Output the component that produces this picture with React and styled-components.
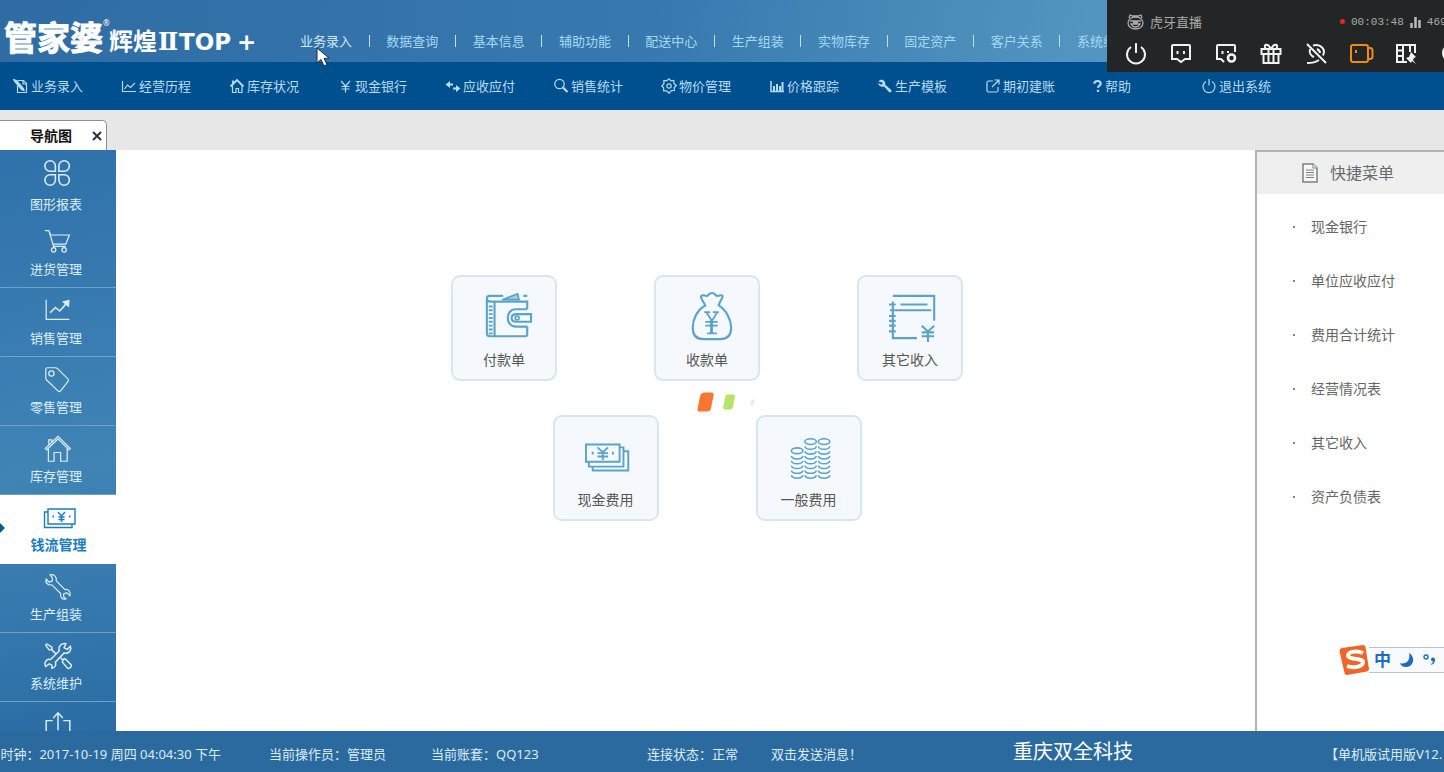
import React from "react"
import styled, { createGlobalStyle } from "styled-components"

const topMenu = [
  "业务录入",
  "数据查询",
  "基本信息",
  "辅助功能",
  "配送中心",
  "生产组装",
  "实物库存",
  "固定资产",
  "客户关系",
  "系统维护",
]

const tools = [
  { text: "业务录入", icon: "entry" },
  { text: "经营历程", icon: "line" },
  { text: "库存状况", icon: "home" },
  { text: "现金银行", icon: "yen" },
  { text: "应收应付", icon: "swap" },
  { text: "销售统计", icon: "search" },
  { text: "物价管理", icon: "gear" },
  { text: "价格跟踪", icon: "bars" },
  { text: "生产模板", icon: "wrench" },
  { text: "期初建账", icon: "share" },
  { text: "帮助", icon: "help", narrow: true },
  { text: "退出系统", icon: "power" },
]

const sections = [
  { text: "图形报表", icon: "petals", first: true },
  { text: "进货管理", icon: "cart" },
  { text: "销售管理", icon: "trend" },
  { text: "零售管理", icon: "tag" },
  { text: "库存管理", icon: "house" },
  { text: "钱流管理", icon: "money", active: true },
  { text: "生产组装", icon: "spanner" },
  { text: "系统维护", icon: "repair" },
]

const cardRows = [
  [
    { text: "付款单", icon: "wallet" },
    { text: "收款单", icon: "bag" },
    { text: "其它收入", icon: "ledger" },
  ],
  [
    { text: "现金费用", icon: "notes" },
    { text: "一般费用", icon: "coins" },
  ],
]

const shortcuts = [
  "现金银行",
  "单位应收应付",
  "费用合计统计",
  "经营情况表",
  "其它收入",
  "资产负债表",
]

const toolIcons = {
  entry: (
    <>
      <path d="M4.500 2.500h6l3 3v9h-9v-7M10 3v3h3" />
      <path d="M0.500 1.500l3 1 7 8 0.500 2-2-0.500-7-8z" fill="currentColor" />
    </>
  ),
  line: <path d="M1.500 3v10.500H15M3.500 11l3-4 3 2.500L14 5" />,
  home: (
    <>
      <path d="M3.500 7.500v7h3.500v-4h2.500v4h3.500v-7" />
      <path d="M1.500 8.500L8 2l6.500 6.500M4 5.500V2.500" strokeWidth="1.800" />
    </>
  ),
  yen: <path d="M4 3l4.500 5L13 3M8.500 8v6.500M4.500 8.500h8M4.500 11h8" />,
  swap: (
    <>
      <path d="M3 6.500h5M8 10.500h5" strokeWidth="1.800" />
      <path d="M0.500 6.500L5 3v7zM15.500 10.500L11 7v7z" fill="currentColor" stroke="none" />
    </>
  ),
  search: (
    <>
      <circle cx="6.500" cy="6" r="4.700" />
      <path d="M10 9.500l4.500 4.500" strokeWidth="2.200" />
    </>
  ),
  gear: (
    <>
      <path d="M8 0.800l2 2 2.800-0.300 0.200 2.900 2.300 2.100-2.100 2 0.200 3-3 0.200L8 15.200l-2.300-2.300-3 0-0.100-3.100L0.800 8l2.100-2.300 0-3 3-0.100z" />
      <circle cx="8" cy="8" r="2.200" />
    </>
  ),
  bars: (
    <>
      <path d="M2 3v10.500h13" strokeWidth="1.500" />
      <path d="M5 13V8M8 13V6M11 13V8M13.500 13V4" strokeWidth="2" />
    </>
  ),
  wrench: (
    <path
      d="M1.500 3.500c1-2 4-2.500 5.800-0.500 1 1 1.200 2.500 0.700 3.500l6 5.200c1.500 1.500-0.500 3.600-2 2.300L7 8.500C4.500 9.500 1 7.500 1.300 5l3 1.700 1.700-1.900z"
      fill="currentColor"
      stroke="none"
    />
  ),
  share: <path d="M8 3H3.500c-1 0-1.500 0.500-1.500 1.500v8c0 1 0.500 1.500 1.500 1.500h8c1 0 1.500-0.500 1.500-1.500V9M9.500 2H14v4.500M14 2L7 9" />,
  help: <path d="M4.500 5.500c0-4 7-4 7 0 0 2.200-3 2.200-3 4.500M8.500 12v2.500" strokeWidth="2.400" />,
  power: <path d="M5 3.500a6 6 0 1 0 6 0M8 1v6.500" />,
}

const sideIcons = {
  petals: (
    <g strokeWidth="1.800">
      <path d="M13 14H7a6 6 0 1 1 6-6zM17 14V8a6 6 0 1 1 6 6zM13 18v6a6 6 0 1 1-6-6zM17 18h6a6 6 0 1 1-6 6z" />
    </g>
  ),
  cart: (
    <>
      <path d="M1 3h4.500l5.500 18h14M7 8h22l-4 10.500H10.500M6.500 5l1 3" />
      <circle cx="11" cy="25" r="2.500" />
      <circle cx="23" cy="25" r="2.500" />
    </>
  ),
  trend: (
    <>
      <path d="M2.500 3v22.500H29" />
      <path d="M7 18l6-6 5 4 8-9" strokeWidth="1.800" />
      <path d="M22 5.500l6.500-1.500-0.500 6.500z" fill="currentColor" />
    </>
  ),
  tag: (
    <>
      <path d="M2 4c0-1.200 0.800-2 2-2h9c1 0 1.800 0.300 2.500 1l12 12c0.800 0.800 0.800 1.800 0 2.600L19 28.500c-1 1-2 1-3 0L3 16c-0.700-0.700-1-1.500-1-2.500z" />
      <circle cx="8.500" cy="8.500" r="3" />
    </>
  ),
  house: (
    <>
      <path d="M1.500 15.500L16 1.500l14 14-1.500 1.500L16 4.500 3 17z" />
      <path d="M5 15v15h6.500V20h7.500v10h7.500V15M5.500 11V5.500h3.500V8" />
    </>
  ),
  money: (
    <>
      <path d="M5 4h27v15H5zM5 7H1.500v15.500H29V19" />
      <path d="M15 7l3.500 4L22 7M18.500 11v6M15.500 12h6M15.500 14.500h6" />
      <path d="M9.500 11.500h1.500M26 11.500h1.500" strokeWidth="1.800" />
    </>
  ),
  spanner: (
    <path d="M7 2c4-1 8 2 7 7l10 10c4-1 7 3 5.500 7l-3.500-3.500-3.500 1.500 0 3.500 2.500 2c-4 1.500-7-2-6-6L9 13.500c-4 1-8-2-6.500-6.500L6 10.500l3.500-1.500V5.500z" />
  ),
  repair: (
    <g strokeWidth="1.700">
      <path d="M25 2c-5-1-9 3-7.500 8L7.500 20c-5-1-8 4-5.500 8l4-3 3 1.500 0 3.500c4-0.500 5-4 4-7L23 12.500c5 1.500 9-3 7-7.500L26.500 8.500 23 6.500z" />
      <path d="M3 2l6 4v3l5 5M3 2l-1 2 4 5 3 0M19 18l3 3M22 20l2-1 7 7c1 2-2 5-4 4l-6-7z" />
    </g>
  ),
  upload: <path d="M10 11H2.500v18h27V11H22M16 22V3M10.500 8L16 2l5.500 6" strokeWidth="1.700" />,
}

const cardIcons = {
  wallet: (
    <>
      <path d="M8 10h38v8M46 36v8c0 1.500-1 2-2 2H7c-2 0-3-1-3-3V7c0-2 1-3 3-3h14M4 7c0 2 1 3 4 3M12 10v36M42 4h4" strokeWidth="2.200" />
      <path d="M20 8l16-6 1.500 6z" fill="currentColor" fillOpacity="0.500" />
      <path d="M46 18H34c-11 0-11 18 0 18h12" strokeWidth="2.200" />
      <path d="M50 23H35c-7 0-7 8 0 8h15z" strokeWidth="2.200" />
      <circle cx="35.500" cy="27" r="2" />
      <path d="M8 14v30" strokeWidth="4" strokeDasharray="2 2" />
    </>
  ),
  bag: (
    <>
      <path d="M20 14C18 9 14 6 16 4s4 1 6 0 2-3 5-3 3 2 5 3 5-2 6 0-3 5-4 10c8 5 13 15 13 23 0 8-3 12-11 12H18C10 49 7 45 7 37c0-8 4-18 13-23z" strokeWidth="2.200" />
      <path d="M19 21h6M28 21h6M21 21l6 9 5.500-9M20 31h13M20 35h13M22 43h10" />
      <path d="M26.500 29v14" strokeWidth="3" />
    </>
  ),
  ledger: (
    <g strokeWidth="2.200">
      <path d="M4 4h43v26M4 10v38h25M12 13h28M1 19h43" />
      <path d="M0 13h7M0 25h7M0 30h7M0 35h7M0 41h7" />
      <path d="M34 35l6.500 6 6.500-6M40.500 41v11M34 42h13M34 46h13" />
    </g>
  ),
  notes: (
    <g transform="translate(-2 4)">
      <path d="M3 9h35v18H3zM38 12h4v20H6v-5M42 16h5v20H10v-4" strokeWidth="2" />
      <path d="M15 12l5.500 5L26 12M20.500 17v8M15 18h11M15 21.500h11" strokeWidth="2" />
      <path d="M9 18h2M30 18h2" strokeWidth="3" />
    </g>
  ),
  coins: (
    <g strokeWidth="1.600" transform="translate(-1 4)">
      <ellipse cx="10.500" cy="15.500" rx="6" ry="3" />
      <ellipse cx="24.500" cy="6" rx="6" ry="3" />
      <ellipse cx="38.500" cy="6" rx="6" ry="3" />
      {[21, 26, 31, 36, 41].map(y => (
        <path key={y} d={`M4.500 ${y}c1 4 11 4 12 0M18.500 ${y}c1 4 11 4 12 0M32.500 ${y}c1 4 11 4 12 0`} />
      ))}
      {[11, 16].map(y => (
        <path key={y} d={`M18.500 ${y}c1 4 11 4 12 0M32.500 ${y}c1 4 11 4 12 0`} />
      ))}
    </g>
  ),
}

const liveIcons = [
  { name: "关闭", draw: <path d="M6 4a9 9 0 1 0 10 0M11 0v10" /> },
  {
    name: "弹幕",
    draw: <path d="M3 2h16q1 0 1 1v13h-5l-4 3-4-3H2V3q0-1 1-1zM7.500 8v3M14 8v3" />,
  },
  {
    name: "弹幕设置",
    draw: (
      <>
        <path d="M20 9V3q0-1-1-1H3Q2 2 2 3v13h4l3 3M7.500 8v3M13 8v2" />
        <circle cx="16.500" cy="15" r="3.500" strokeWidth="2.600" />
      </>
    ),
  },
  {
    name: "礼物",
    draw: <path d="M1.500 6h19v5h-19zM3.500 11v9h15v-9M8.500 6v14M13.500 6v14M10.500 5.500C8 0 3 1 5.500 5.500M11.500 5.500C14 0 19 1 16.500 5.500" />,
  },
  {
    name: "静音",
    draw: <path d="M2 1l19 19M8 2.500c8-2 13 4 10 10M5 6c-1 4 1 7 4 8M2 20c5 0 9-1 12-3M12 6c2 1 3 2 3 4" />,
  },
  {
    name: "摄像",
    orange: true,
    draw: <path d="M3 2h13q2 0 2 2v13q0 2-2 2H3q-2 0-2-2V4q0-2 2-2zM18 5h2c1.500 0 2.500 1 2.500 2.500v6c0 1.500-1 2.500-2.500 2.500h-2M6 7v3" />,
  },
  {
    name: "录像",
    draw: (
      <>
        <path d="M12 19H2V2h18v8M8 2v17M15 2v7M2 7.500h6M2 13h6" />
        <path d="M16 9l5 5-2 1-1 2 3 4-4-3-1 2-5-5 3-1z" fill="currentColor" stroke="none" />
      </>
    ),
  },
  { name: "更多", draw: <circle cx="11" cy="10" r="8" /> },
]

function App() {
  return (
    <Page>
      <GlobalStyle />
      <Header>
        <Logo>
          <Brand>管家婆</Brand>
          <Reg>®</Reg>
          <Edition>辉煌</Edition>
          <Roman>Ⅱ</Roman>
          <Top>TOP</Top>
          <Top>+</Top>
        </Logo>
        <TopNav>
          {topMenu.map((text, i) => (
            <React.Fragment key={text}>
              {i > 0 && <Divider />}
              <TopButton $current={i === 0}>{text}</TopButton>
            </React.Fragment>
          ))}
        </TopNav>
      </Header>
      <Toolbar>
        {tools.map(t => (
          <ToolButton key={t.text}>
            <ToolIcon viewBox={t.narrow ? "3 0 11 16" : "0 0 16 16"} $narrow={t.narrow}>
              {toolIcons[t.icon]}
            </ToolIcon>
            {t.text}
          </ToolButton>
        ))}
      </Toolbar>
      <TabStrip>
        <Tab>
          <TabTitle>导航图</TabTitle>
          <CloseButton aria-label="关闭">
            <svg width="10" height="10" viewBox="0 0 10 10">
              <path d="M1 1l8 8M9 1L1 9" stroke="#27333c" strokeWidth="2" />
            </svg>
          </CloseButton>
        </Tab>
      </TabStrip>
      <Body>
        <Sidebar>
          {sections.map(s => (
            <Section key={s.text} $first={s.first} $active={s.active}>
              {s.active && <Pointer />}
              <SideIcon viewBox={s.active ? "0 0 34 26" : "0 0 32 32"} $wide={s.active}>
                {sideIcons[s.icon]}
              </SideIcon>
              <span>{s.text}</span>
            </Section>
          ))}
          <Section aria-label="更多">
            <SideIcon viewBox="0 0 32 32">{sideIcons.upload}</SideIcon>
          </Section>
        </Sidebar>
        <Board>
          {cardRows.map((row, i) => (
            <CardRow key={i}>
              {row.map(c => (
                <Card key={c.text}>
                  <CardIcon viewBox="0 0 52 52">{cardIcons[c.icon]}</CardIcon>
                  <span>{c.text}</span>
                </Card>
              ))}
            </CardRow>
          ))}
        </Board>
        <Panel>
          <PanelHead>
            <svg width="16" height="20" viewBox="0 0 16 20" fill="#f7f7f7" stroke="#7d8082">
              <path d="M1 1h10l4 4v14H1z" strokeWidth="1.500" />
              <path d="M11 1v4h4M4 7h8M4 9.500h8M4 12h8M4 14.500h8" />
            </svg>
            快捷菜单
          </PanelHead>
          <ShortcutList>
            {shortcuts.map(text => (
              <li key={text}>
                <Shortcut href="#">{text}</Shortcut>
              </li>
            ))}
          </ShortcutList>
        </Panel>
      </Body>
      <Footer>
        <Clock>时钟：2017-10-19 周四 04:04:30 下午</Clock>
        <span>当前操作员：管理员</span>
        <span>当前账套：QQ123</span>
        <span>连接状态：正常</span>
        <span>双击发送消息！</span>
        <Company>重庆双全科技</Company>
        <span>【单机版试用版V12.</span>
      </Footer>

      <Loading viewBox="0 0 60 22">
        <path d="M8 2h6q3 0 2.500 3l-2.500 12q-1 3-4 3H4q-3 0-2.500-3l2.500-12q1-3 4-3z" fill="#f8762f" />
        <path d="M30 4h5q2 0 1.500 2l-2 10q-0.500 2-2.500 2h-5q-2 0-1.500-2l2-10q0.500-2 2.500-2z" fill="#b6e468" />
        <path d="M52 9h3l-1.500 5h-3z" fill="#e6ece8" />
      </Loading>
      <Live>
        <LiveTitle>
          <svg width="17" height="16" viewBox="0 0 17 16" fill="none" stroke="#aaa" strokeWidth="1.300">
            <path d="M2 4l1-3 3 1h5l3-1 1 3M1 9c0-8 15-8 15 0s-15 8-15 0zM3 7h11M4 10c2 4 7 4 9 0z" />
            <path d="M6 8.500h5" strokeWidth="3" />
          </svg>
          <LiveName>虎牙直播</LiveName>
          <RecordDot />
          <LiveTime>00:03:48</LiveTime>
          <svg width="11" height="12" viewBox="0 0 11 12" stroke="#bbb" strokeWidth="2.500">
            <path d="M1.500 12V7M5.500 12V1M9.500 12V4" />
          </svg>
          <LiveTime>469</LiveTime>
        </LiveTitle>
        <LiveTools>
          {liveIcons.map(icon => (
            <LiveButton key={icon.name} aria-label={icon.name} $orange={icon.orange}>
              <svg width="22" height="22" viewBox="0 0 22 22">
                {icon.draw}
              </svg>
            </LiveButton>
          ))}
        </LiveTools>
      </Live>
      <Ime>
        <svg width="30" height="30" viewBox="0 0 30 30">
          <path d="M3 3l21-3q2 0 2.500 2L30 24q0 2-2 2.500L8 30q-2 0-2.500-2L0.500 6q0-2.500 2.500-3z" fill="#ee6527" />
          <path d="M24 8C17 5 8 7 9 11s15 2 15 6-8 7-16 4" fill="none" stroke="#fff" strokeWidth="4" />
        </svg>
        <ImeBar>
          <ImeMode>中</ImeMode>
          <svg width="16" height="16" viewBox="0 0 16 16">
            <path d="M10 1c6 4 5 10 1 13-4 2-9 1-10-3 5 2 11-2 9-10z" fill="#1c6cc0" />
          </svg>
          <svg width="14" height="14" viewBox="0 0 14 14">
            <circle cx="3" cy="4" r="2" fill="none" stroke="#1c6cc0" strokeWidth="1.400" />
            <path d="M8 6.500a2 2 0 1 1 4 0q0 4-3.500 5.500l-0.500-1q2-1 2-2.500-2 0-2-2z" fill="#1c6cc0" />
          </svg>
        </ImeBar>
      </Ime>
      <Cursor viewBox="0 0 14 20">
        <path d="M1 1v15l4-3.500 3 6.500 3-1.500-3-6 5-0.500z" fill="#fff" stroke="#1d2d3c" />
      </Cursor>
    </Page>
  )
}

export default App

const GlobalStyle = createGlobalStyle`
  * {
    box-sizing: border-box;
  }
  body {
    margin: 0;
    overflow: hidden;
    font-family: "Noto Sans", "Noto Sans CJK SC", sans-serif;
    font-size: 13px;
    line-height: 18px;
  }
  button {
    padding: 0;
    border: 0;
    background: none;
    color: inherit;
    font: inherit;
    white-space: nowrap;
  }
  svg {
    flex: none;
  }
`
const Page = styled.div`
  display: flex;
  flex-direction: column;
  height: 100vh;
  background: #fff;
`
const Header = styled.header`
  display: flex;
  flex: none;
  height: 62px;
  background: linear-gradient(100deg, #2f6ca4 0%, #3779af 45%, #5295c0 75%, #5a9cc5 100%);
`
const Logo = styled.div`
  display: flex;
  align-items: baseline;
  flex: none;
  width: 300px;
  padding: 16px 0 0 4px;
  color: #fff;
  font-weight: bold;
  white-space: nowrap;
`
const Brand = styled.span`
  font-size: 33px;
  line-height: 44px;
  -webkit-text-stroke: 1px #fff;
`
const Reg = styled.span`
  align-self: flex-start;
  width: 6px;
  font-size: 8px;
  font-weight: normal;
  line-height: 14px;
`
const Edition = styled.span`
  font-size: 24px;
`
const Roman = styled.span`
  width: 22px;
  font-family: "Liberation Serif", "DejaVu Serif", serif;
  font-size: 24px;
  text-align: center;
`
const Top = styled.span`
  margin-right: 6px;
  font-family: "DejaVu Sans", sans-serif;
  font-size: 23px;
`
const TopNav = styled.nav`
  display: flex;
  flex: 1;
  justify-content: space-between;
  align-items: center;
  padding: 20px 315px 0 0;
`
const TopButton = styled.button`
  color: ${props => (props.$current ? "#d3e9f7" : "#a5d8f5")};
`
const Divider = styled.span`
  width: 1px;
  height: 12px;
  background: #c3e0f1;
`
const Toolbar = styled.nav`
  display: flex;
  flex: none;
  height: 48px;
  padding-left: 13px;
  background: #00508f;
  color: #b5dcf3;
`
const ToolButton = styled.button`
  display: flex;
  align-items: center;
  gap: 2px;
  flex: 0 0 108px;
  height: 47px;
`
const ToolIcon = styled.svg`
  width: ${props => (props.$narrow ? "10px" : "16px")};
  height: 16px;
  fill: none;
  stroke: currentColor;
  stroke-width: 1.2;
`
const TabStrip = styled.div`
  display: flex;
  align-items: flex-end;
  flex: none;
  height: 40px;
  background: #e7e7e7;
`
const Tab = styled.div`
  display: flex;
  align-items: center;
  justify-content: space-between;
  width: 107px;
  height: 30px;
  padding: 0 4px 0 30px;
  border: 1px solid #8e8e8e;
  border-width: 1px 1px 0 0;
  border-radius: 0 5px 0 0;
  background: #fff;
`
const TabTitle = styled.span`
  color: #111;
  font-size: 14px;
  font-weight: bold;
`
const CloseButton = styled.button`
  display: flex;
`
const Body = styled.div`
  display: flex;
  flex: 1;
  min-height: 0;
`
const Sidebar = styled.nav`
  flex: 0 0 116px;
  overflow: hidden;
  background: linear-gradient(170deg, #2f71aa 0%, #4084b6 55%, #2a6da4 100%);
`
const Section = styled.button`
  position: relative;
  display: flex;
  flex-direction: column;
  align-items: center;
  gap: ${props => (props.$first ? "8px" : "4px")};
  width: 100%;
  height: 69px;
  padding: ${props => (props.$active ? "9px 0 0 1px" : "9px 4px 0 0")};
  border-bottom: 1px solid ${props => (props.$first || props.$active ? "transparent" : "#6ba3cb")};
  background: ${props => (props.$active ? "#fff" : "none")};
  color: ${props => (props.$active ? "#1a7dbd" : "#dceefa")};
  font-size: ${props => (props.$active ? "14px" : "13px")};
  font-weight: ${props => (props.$active ? "bold" : "normal")};
`
const Pointer = styled.i`
  position: absolute;
  left: 0;
  top: 28px;
  border: 5px solid transparent;
  border-left-color: #0f5a94;
  border-right-width: 0;
`
const SideIcon = styled.svg`
  width: ${props => (props.$wide ? "34px" : "28px")};
  height: 28px;
  margin-left: 3px;
  fill: none;
  stroke: currentColor;
  stroke-width: 1.4;
`
const Board = styled.main`
  display: flex;
  flex-direction: column;
  align-items: center;
  gap: 34px;
  flex: 1;
  padding: 125px 0 0 43px;
`
const CardRow = styled.div`
  display: flex;
  gap: 97px;
`
const Card = styled.button`
  display: flex;
  flex-direction: column;
  align-items: center;
  gap: 9px;
  width: 106px;
  height: 106px;
  padding-top: 15px;
  border: 2px solid #d5e7ef;
  border-radius: 9px;
  background: #f5f9fe;
  color: #555;
  font-size: 14px;
`
const CardIcon = styled.svg`
  width: 50px;
  height: 50px;
  margin-left: 8px;
  overflow: visible;
  fill: none;
  stroke: currentColor;
  stroke-width: 1.8;
  color: #5ba3c9;
`
const Panel = styled.aside`
  flex: 0 0 189px;
  border-top: 2px solid #b4b4b4;
  border-left: 2px solid #b4b4b4;
`
const PanelHead = styled.h2`
  display: flex;
  align-items: center;
  gap: 12px;
  height: 42px;
  margin: 0;
  padding-left: 45px;
  background: #efefef;
  color: #666b6e;
  font-size: 16px;
  font-weight: normal;
`
const ShortcutList = styled.ul`
  margin: 0;
  padding: 6px 0 0 36px;
  list-style: none;

  li {
    display: flex;
    align-items: center;
    height: 54px;
  }
  li::before {
    content: "";
    width: 2px;
    height: 2px;
    margin-right: 16px;
    background: #888;
  }
`
const Shortcut = styled.a`
  color: #666;
  font-size: 14px;
  text-decoration: none;
`
const Footer = styled.footer`
  display: grid;
  grid-template-columns: 269px 162px 216px 124px 242px 1fr 119px;
  align-items: center;
  flex: none;
  height: 41px;
  padding-top: 4px;
  overflow: hidden;
  background: #2a6a9f;
  color: #dcecf7;
  white-space: nowrap;
`
const Clock = styled.span`
  display: flex;
  justify-content: flex-end;
  padding-right: 48px;
`
const Company = styled.span`
  padding-bottom: 4px;
  color: #fff;
  font-size: 20px;
`
const Loading = styled.svg`
  position: fixed;
  left: calc(50% - 26px);
  top: calc(50% + 4px);
  width: 64px;
  height: 24px;
`
const Live = styled.section`
  position: fixed;
  top: 0;
  right: 0;
  width: 337px;
  height: 72px;
  overflow: hidden;
  background: #232627;
`
const LiveTitle = styled.div`
  display: flex;
  align-items: center;
  gap: 6px;
  height: 43px;
  padding-left: 20px;
  color: #a9a9a9;
`
const LiveName = styled.span`
  flex: 0 0 184px;
`
const RecordDot = styled.i`
  flex: none;
  width: 5px;
  height: 5px;
  border-radius: 50%;
  background: #e8261c;
`
const LiveTime = styled.span`
  font-family: "Liberation Mono", monospace;
  font-size: 11px;
`
const LiveTools = styled.div`
  display: flex;
  gap: 23px;
  padding-left: 18px;
`
const LiveButton = styled.button`
  display: flex;
  color: ${props => (props.$orange ? "#f08a13" : "#f2f2f2")};

  svg {
    overflow: visible;
    fill: none;
    stroke: currentColor;
    stroke-width: 2;
  }
`
const Ime = styled.div`
  position: fixed;
  right: 0;
  bottom: 97px;
  display: flex;
  align-items: center;
  width: 105px;
`
const ImeBar = styled.div`
  display: flex;
  align-items: center;
  gap: 8px;
  flex: 1;
  height: 26px;
  padding-left: 5px;
  border: 1px solid #b9c4cc;
  border-width: 1px 0;
  background: #f8fbfe;
`
const ImeMode = styled.span`
  color: #1c6cc0;
  font-size: 17px;
  font-weight: bold;
`
const Cursor = styled.svg`
  position: fixed;
  left: 316px;
  top: 47px;
  width: 14px;
  height: 20px;
`
